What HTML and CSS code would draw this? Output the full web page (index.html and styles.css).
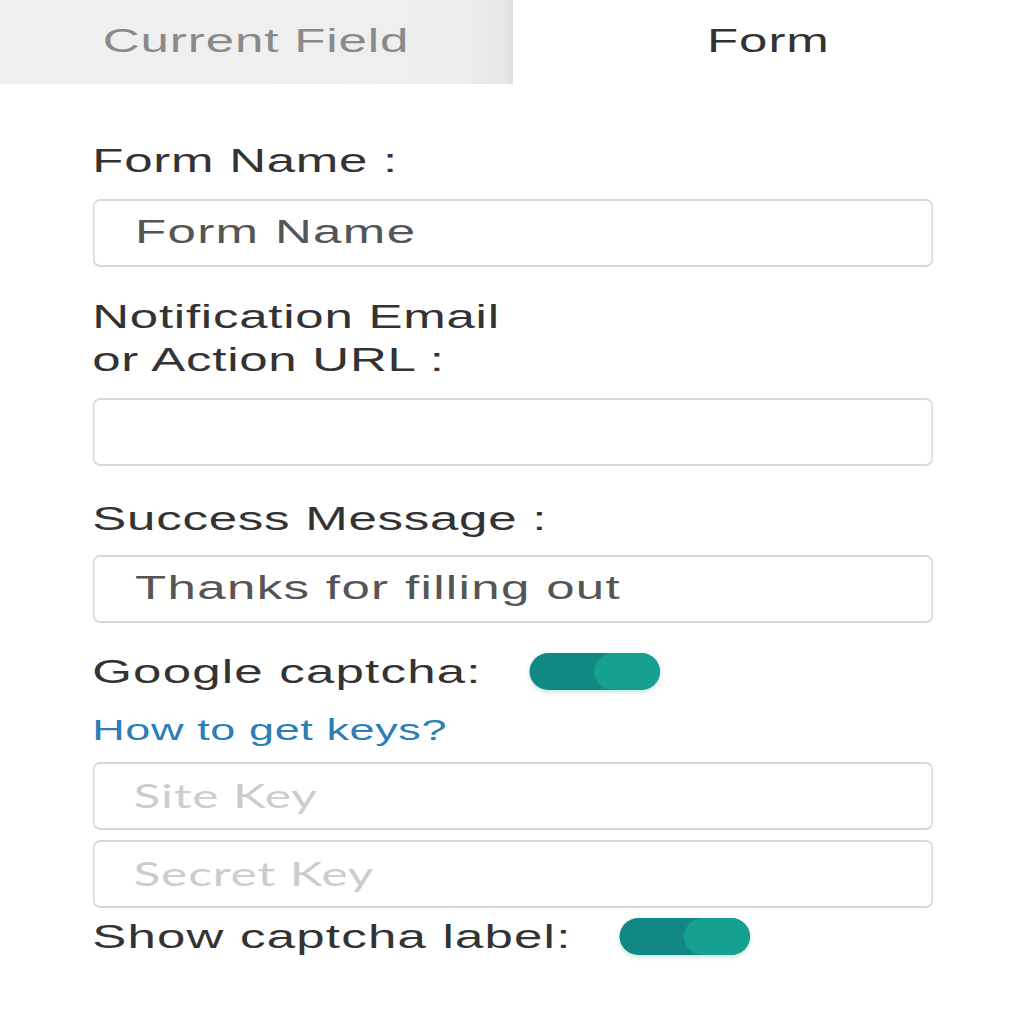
FILE: index.html
```html
<!DOCTYPE html>
<html>
<head>
<meta charset="utf-8">
<link rel="stylesheet" href="styles.css">
</head>
<body>
<div class="page">
  <div class="tabs">
    <div class="tab tab-inactive">Current Field</div>
    <div class="tab tab-active">Form</div>
  </div>
  <div class="panel">
    <div class="label label-first">Form Name :</div>
    <div class="input"><span class="value">Form Name</span></div>
    <div class="label label-multi">Notification Email<br>or Action URL :</div>
    <div class="input"></div>
    <div class="label label-success">Success Message :</div>
    <div class="input"><span class="value">Thanks for filling out</span></div>
    <div class="toggle-row row-captcha">
      <span class="label-inline">Google captcha:</span>
      <span class="toggle"><span class="knob"></span></span>
    </div>
    <div class="link">How to get keys?</div>
    <div class="input input-key"><span class="placeholder">Site Key</span></div>
    <div class="input input-key input-key2"><span class="placeholder">Secret Key</span></div>
    <div class="toggle-row row-show">
      <span class="label-inline">Show captcha label:</span>
      <span class="toggle"><span class="knob"></span></span>
    </div>
  </div>
</div>
</body>
</html>
```
FILE: styles.css
```css
html, body {
  margin: 0;
  padding: 0;
  background: #ffffff;
}
body {
  width: 1024px;
  height: 1024px;
  overflow: hidden;
  font-family: "Liberation Sans", Arial, sans-serif;
  color: #333333;
}
.page {
  width: 683px;
  transform: scaleX(1.5);
  transform-origin: 0 0;
}
.tabs {
  display: flex;
  height: 84px;
}
.tab {
  width: 341.5px;
  display: flex;
  justify-content: center;
  padding-top: 22px;
  box-sizing: border-box;
  font-size: 34px;
  line-height: 36px;
  letter-spacing: 0.6px;
}
.tab-inactive {
  background: linear-gradient(to right, #f0f0f0 0%, #eeeeee 90%, #e7e7e7 98%, #dedede 100%);
  color: #8a8a8a;
}
.tab-active {
  background: #ffffff;
  color: #333333;
}
.panel {
  margin-left: 61.5px;
  width: 560px;
  display: flex;
  flex-direction: column;
}
.label {
  font-size: 34px;
  line-height: 43px;
  color: #333333;
  letter-spacing: 0.5px;
}
.label-first {
  margin-top: 55px;
  margin-bottom: 17px;
}
.label-multi {
  margin-top: 28px;
  margin-bottom: 17px;
}
.label-success {
  margin-top: 31px;
  margin-bottom: 15px;
}
.input {
  height: 68px;
  box-sizing: border-box;
  border: 2px solid #d8d8d8;
  border-left-width: 1.4px;
  border-right-width: 1.4px;
  border-radius: 5px / 7px;
  display: flex;
  align-items: center;
  padding-left: 27.5px;
}
.value {
  font-size: 34px;
  color: #555555;
  letter-spacing: 0.9px;
  padding-bottom: 4px;
}
.toggle-row {
  display: flex;
  align-items: center;
  height: 40px;
}
.row-captcha {
  margin-top: 28px;
}
.row-show {
  margin-top: 8px;
}
.label-inline {
  font-size: 34px;
  color: #333333;
  letter-spacing: 0.8px;
}
.toggle {
  position: relative;
  margin-left: 32px;
  width: 87px;
  height: 37px;
  border-radius: 13px / 19px;
  background: #118883;
  box-shadow: 0 2px 4px rgba(17, 136, 131, 0.25);
}
.knob {
  position: absolute;
  right: 0;
  top: 0;
  width: 44px;
  height: 37px;
  border-radius: 13px / 19px;
  background: #15a08f;
}
.link {
  margin-top: 21px;
  margin-bottom: 14px;
  font-size: 30px;
  line-height: 36px;
  color: #2b7fb5;
  letter-spacing: 0.4px;
}
.input-key {
  padding-left: 26.5px;
}
.input-key2 {
  margin-top: 10px;
}
.placeholder {
  font-family: "Lato", "Open Sans", sans-serif;
  font-size: 33px;
  color: #cccccc;
  letter-spacing: 0.6px;
  padding-bottom: 2px;
}
```
